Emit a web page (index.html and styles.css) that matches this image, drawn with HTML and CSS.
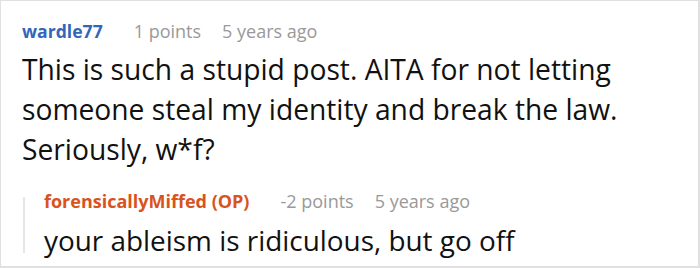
FILE: index.html
```html
<!DOCTYPE html>
<html>
<head>
<meta charset="utf-8">
<link rel="stylesheet" href="styles.css">
</head>
<body>
<div class="card">
  <div class="comment">
    <div class="meta">
      <span class="author">wardle77</span>
      <span class="info">1 points</span>
      <span class="info">5 years ago</span>
    </div>
    <div class="text main">This is such a stupid post. AITA for not letting someone steal my identity and break the law. Seriously, w*f?</div>
    <div class="reply">
      <div class="bar"></div>
      <div class="reply-body">
        <div class="meta">
          <span class="author op">forensicallyMiffed (OP)</span>
          <span class="info">-2 points</span>
          <span class="info">5 years ago</span>
        </div>
        <div class="text sub">your ableism is ridiculous, but go off</div>
      </div>
    </div>
  </div>
</div>
</body>
</html>
```
FILE: styles.css
```css
html, body {
  margin: 0;
  padding: 0;
  background: #fff;
}
.card {
  box-sizing: border-box;
  width: 700px;
  height: 268px;
  border: 1px solid #e0e0e0;
  border-right-width: 2px;
  border-bottom-width: 2px;
  padding: 17px 0 0 21px;
  font-family: "Open Sans", sans-serif;
  overflow: hidden;
}
.meta {
  display: flex;
  align-items: baseline;
  gap: 21px;
  line-height: 26px;
}
.author {
  font-size: 17.6px;
  font-weight: 700;
  color: #3366bb;
  margin-right: 10px;
}
.author.op {
  font-size: 18px;
  color: #d9531e;
}
.info {
  font-size: 18px;
  color: #999;
}
.text {
  color: #111;
}
.main {
  font-size: 30px;
  line-height: 40px;
  margin-top: 5px;
  transform: scaleX(0.94);
  transform-origin: left top;
}
.reply {
  display: flex;
  margin-top: 19px;
  margin-left: 1px;
}
.bar {
  width: 2px;
  background: #e6e6e6;
  margin: 9px 0 7px 0;
}
.reply-body {
  padding-left: 19px;
}
.sub {
  font-size: 27.9px;
  line-height: 40px;
  margin-top: 6px;
}
```
